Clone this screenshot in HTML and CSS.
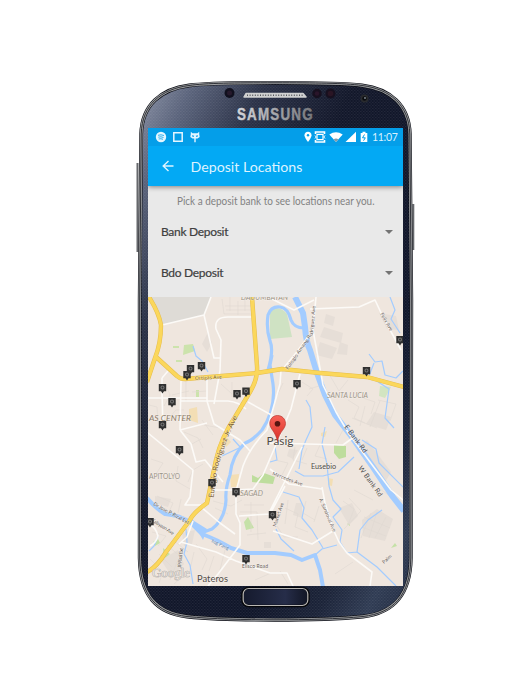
FILE: index.html
```
<!DOCTYPE html>
<html lang="en">
<head>
<meta charset="utf-8">
<title>Deposit Locations</title>
<link rel="stylesheet" href="styles.css">
</head>
<body>
<main class="phone">
  <svg class="phone-body" viewBox="130 75 290 552" aria-hidden="true">
    <defs>
      <linearGradient id="navy" x1="0" y1="0" x2="1" y2="1">
        <stop offset="0" stop-color="#8d94a8"/><stop offset=".1" stop-color="#5b647c"/><stop offset=".23" stop-color="#2b3248"/><stop offset=".4" stop-color="#12172a"/><stop offset=".7" stop-color="#10162a"/><stop offset=".82" stop-color="#1b2338"/><stop offset=".91" stop-color="#303c54"/><stop offset="1" stop-color="#202a40"/>
      </linearGradient>
      <linearGradient id="letters"><stop offset="0" stop-color="#d5d6da"/><stop offset="1" stop-color="#77787c"/></linearGradient>
      <linearGradient id="key"><stop offset="0" stop-color="#151a2d"/><stop offset=".65" stop-color="#262d49"/><stop offset="1" stop-color="#111523"/></linearGradient>
      <pattern id="weave" width="3" height="3" patternUnits="userSpaceOnUse"><path d="M0 .5H1.500M1.500 2H3" stroke="#fff" stroke-opacity=".07"/></pattern>
      <path id="shell" d="M275 82.800C235 82.800 206 83 189 85.500C161 89 142 105 141.200 134L139.700 300V558C140.200 596 157 613 187 616.500C212 619 244 619.800 275 619.800C306 619.800 338 619 363 616.500C393 613 410.300 596 410.800 558L411.300 300L409.800 134C409 105 390 89 362 85.500C344 83 315 82.800 275 82.800Z"/>
    </defs>
    <path d="M137.500 163V252M413.300 204V250" stroke="#66686c" stroke-width="2"/>
    <use href="#shell" fill="url(#navy)" stroke="#0b0d15" stroke-width="3.800"/>
    <use href="#shell" fill="url(#weave)" stroke="#a0a2a4" stroke-width="2.600"/>
    <use href="#shell" fill="none" stroke="#303238" stroke-width="1"/>
    <circle cx="229.500" cy="93" r="5" fill="#10101e"/><circle cx="229.500" cy="93" r="2.500" fill="#26192c"/>
    <circle cx="317" cy="93.500" r="4.700" fill="#17101f"/><circle cx="317" cy="93.500" r="2.300" fill="#2a152a"/><circle cx="330.500" cy="93.500" r="5" fill="#17101f"/><circle cx="330.500" cy="93.500" r="2.800" fill="#2a1524"/>
    <circle cx="364.500" cy="98.500" r="4" fill="#292b2e"/><circle cx="364.500" cy="98.500" r="2.200" fill="#090b0e"/><circle cx="365" cy="98" r=".9" fill="#87909a"/>
    <path d="M246 93.500H303L306 97H244Z" fill="#d0d1d1" stroke="#d0d1d1" stroke-width="1.500" stroke-linejoin="round"/>
    <path d="M247 95.300H304" stroke="#55585c" stroke-width="1.500" stroke-dasharray="1 1.600"/>
    <g class="brand" transform="translate(237 120) scale(.84 1)"><text textLength="90" fill="url(#letters)" stroke="url(#letters)">SAMSUNG</text></g>
    <rect x="242.500" y="588" width="66" height="18" rx="6" fill="url(#key)" stroke="#050609" stroke-width="2.500"/>
    <rect x="243.200" y="588.500" width="64.600" height="17" rx="5.500" fill="none" stroke="#b9b7b4" stroke-width="1.200"/>
  </svg>
  <section class="screen">
    <header class="app-header">
      <div class="status-bar">
        <div class="status-group notifications">
          <svg class="glyph" viewBox="0 0 12 12"><circle cx="6" cy="6" r="5.200" fill="#e5f6ff"/><path d="M3 4.300Q6 3.200 9 4.500M3.300 6.200Q6 5.200 8.500 6.500M3.700 8Q6 7.300 8 8.300" fill="none" stroke="#049ee9" stroke-width=".8"/></svg>
          <svg class="glyph" viewBox="0 0 12 12"><path d="M1.800 1.800H10.200V10.200H1.800Z" fill="none" stroke="#e5f6ff" stroke-width="1.500"/></svg>
          <svg class="glyph" viewBox="0 0 12 12"><path d="M1.800.800L3.500 2.300H8.500L10.200.800V3L10.700 6L8.500 7.500H6.700V11.200H5.300V7.500H3.500L1.300 6L1.800 3Z" fill="#e5f6ff"/><path d="M3 4.200L5.300 4.800L4.500 6L3.200 5.500ZM9 4.200L6.700 4.800L7.500 6L8.800 5.500Z" fill="#049ee9"/></svg>
        </div>
        <div class="status-group indicators">
          <svg width="8" height="12" viewBox="0 0 8 12"><path d="M4 .8C1.900.8.500 2.300.500 4.200C.5 6.500 4 11 4 11S7.500 6.500 7.500 4.200C7.500 2.300 6.100.8 4 .8Z" fill="#fff"/><circle cx="4" cy="4.300" r="1.200" fill="#049ee9"/></svg>
          <svg width="12" height="12" viewBox="0 0 12 12"><path d="M1.500 3V1H10.500V3M1.500 9V11H10.500V9" fill="none" stroke="#fff" stroke-width="1.600"/><path d="M3 3.300H9V8.700H3Z" fill="none" stroke="#fff" stroke-width="1.200"/><path d="M1 4.500L2.200 6L1 7.500M11 4.500L9.800 6L11 7.500" fill="none" stroke="#fff"/></svg>
          <svg width="14" height="12" viewBox="0 0 14 12"><path d="M.3 3.500Q7-1 13.700 3.500L7 11Z" fill="#fff"/><path d="M4.600 8.300Q7 6.800 9.400 8.300L7 11Z" fill="#899ba6"/></svg>
          <svg width="12" height="12" viewBox="0 0 12 12"><path d="M.5 11L11 .8V11Z" fill="#fff"/></svg>
          <svg width="8" height="12" viewBox="0 0 8 12"><path d="M.7 2H2.500V.8H5.500V2H7.300V11H.7Z" fill="#fff"/><path d="M4.500 3.500L2.500 6.800H5.300L3.500 9.700" fill="none" stroke="#049ee9"/></svg>
          <span class="clock">11:07</span>
        </div>
      </div>
      <div class="toolbar">
        <svg class="back" viewBox="0 0 12 12"><path d="M6.500 1L1.200 6L6.500 11M1.200 6H11.500" fill="none" stroke="#def4ff" stroke-width="1.400"/></svg>
        <h1 class="title">Deposit Locations</h1>
      </div>
    </header>
    <div class="chooser">
      <p class="hint"><svg width="202" height="16" viewBox="0 0 202 16"><text x="0" y="10.500" textLength="197.500" lengthAdjust="spacingAndGlyphs">Pick a deposit bank to see locations near you.</text></svg></p>
      <div class="select-row"><span>Bank Deposit</span><i class="caret"></i></div>
      <div class="select-row"><span>Bdo Deposit</span><i class="caret"></i></div>
    </div>
    <svg class="map" viewBox="148 297 255 289" role="img" aria-label="Map of deposit locations in Pasig">
      <defs>
        <g id="branch"><path d="M-3.700-4H3.700V3.300H1.500L0 5.500L-1.500 3.300H-3.700Z" fill="#303030"/><circle cy="-.5" r="1.500" fill="none" stroke="#747474" stroke-width="1.100"/></g>
        <path id="rodriguez" d="M213.500 498L218 467L228 437L240 412"/>
        <path id="amang" d="M288 370L313 334L316.500 297"/>
        <linearGradient id="pin" x2="0" y2="1"><stop stop-color="#f76258"/><stop offset="1" stop-color="#d93026"/></linearGradient>
      </defs>
      <path d="M148 297H403V586H148Z" fill="#efe6de"/>
      <path d="M149 297H211L204 315L162 325L158 310Z" fill="#dedbd6"/>
      <g fill="#cfe2c3">
        <path d="M270 310Q280 305 287 314L292 337L270 339Z"/>
        <path d="M380 386L391 387L385 398L379 396Z" fill="#d2e5c1"/>
        <path d="M184 345L193 344L195 351L183 355Z" fill="#cce3ac"/>
        <path d="M173 346H179V348H173ZM176 360H182V362H176ZM196 390H199V397H196Z" fill="#cce3ac"/>
        <path d="M334 445L346 446L346 457L339 459L334 453Z" fill="#bedd9d"/>
        <path d="M252 475L258 478L264 473L275 477L273 484L252 482Z" fill="#bedd9d"/>
        <path d="M244 522L248 517L254 528L246 530ZM153 542L158 539L160 543L155 546ZM374 522L379 518L384 524L382 529ZM391 548L395 543L397 546Z" fill="#c5e1a7"/>
        <path d="M163 548L170 554L164 560ZM343 512L347 508L348 512ZM347 524L350 522V526Z" fill="#c5e1a7"/>
      </g>
      <path d="M189 409L197 407L198 423L189 420ZM230 475L239 474L238 487H231ZM221 440L226 436L231 442L226 447ZM321 433L327 431L325 437L321 436ZM328 478L333 479L332 486L328 485Z" fill="#f3deb4"/>
      <g fill="#e6ded7">
        <path d="M324 327L343 333L341 343L320 337ZM320 342L337 348L332 359L316 355ZM340 342L348 345L347 355L337 354ZM379 313L396 316L399 330L387 329ZM326 314L335 317L333 326L324 323ZM374 412L391 417L386 430L366 424ZM357 450L367 440L391 472L384 484ZM362 520L377 509L393 519L385 541L363 536ZM339 508L352 503L358 516L349 525ZM296 503L302 503L302 518L293 515Z"/>
        <path d="M208 332L212 343L207 352L202 344ZM161 560L178 550L184 564L172 577ZM264 542L271 542L271 548L264 548ZM155 496L171 499L168 507L155 503ZM182 533L195 530L192 544L184 546ZM289 449L298 450L293 459L287 456Z"/>
      </g>
      <!-- Local streets -->
      <g class="blocks">
        <path d="M222 299L224 314H251M230 297V311M238 301V315M245 298V311M225 306H252M226 310H252"/>
        <path d="M166 385L170 395L164 406M172 395L189 391M186 380V402M192 392L207 391M232 382V397M221 384L232 394M283 383L276 398M302 382L313 389L307 396M309 389L319 386M329 374L339 391L348 380"/>
        <path d="M149 405L157 407L158 421M168 419L176 410H184M184 432L198 438L203 448M190 445L201 439M202 420L213 435M204 425L220 428M203 464L193 470L188 482M178 466L176 481L190 489M151 459L163 463L156 474"/>
        <path d="M275 460L288 463L282 475M295 447L293 460L307 464M307 448L302 460M320 445L315 456L327 459M343 430L336 443M348 400L359 407L354 418L365 423M360 397L375 402L371 414M378 400L396 404L390 421M352 418L377 428M365 406L360 426M380 401L370 427"/>
        <path d="M157 496L173 503L169 512M181 499L178 513M213 501L231 506L242 500M215 508L228 514M240 512L257 512L258 540M251 502V532M244 505H264M247 535L266 533M277 526L284 537H298M285 508L298 514L295 527L308 532M288 500L285 524M306 501L303 513L315 520M319 506L314 522M343 501L354 509L348 525M349 498L361 511L344 529M371 513L361 538M377 512L369 538M386 517L375 538M364 517L390 528M362 527L386 536"/>
        <path d="M150 559L163 572L159 583M159 554L172 567M167 545L182 558M173 540L188 552M177 562L170 580M194 552L189 574M196 544L207 559L202 570M214 556L209 571M225 550L220 570M184 575L174 584M335 574L353 562M255 580L271 573M280 571L288 584M354 490L373 500M380 489L397 501M152 532L166 536L158 546"/>
      </g>
      <path d="M193 346L196 356L202 361L208 372M222 456L239 448M233 439L241 448" class="water thin"/>
      <path d="M268 370Q274 350 270 341Q266 329 268 315Q271 306 280 307Q288 308 291 320Q294 328 304 328M272 355L270 365L273 384Q276 409 262 430Q252 441 245 443Q232 455 230 475Q225 489 226 500Q225 519 212 529L201 533" class="water medium"/>
      <path d="M295 297L303 313L305 327Q306 342 310 350L317 373L325 395L335 415L352 437L373 467L393 497L404 511" class="water main"/>
      <path d="M147 498Q154 507 165 514Q180 515 191 523L202 534Q218 540 231 548L247 553L275 553L291 555L302 560L315 555L320 570L323 587" class="water west"/>
      <path d="M191 519L207 529L203 540Z" fill="#a3ccff"/>
      <g class="water thin">
        <path d="M295 471L304 476L323 476L338 472L354 457M306 400L310 407L312 427L306 440L302 450L299 469M325 427L322 444L327 464L329 486L333 500L341 509L333 517L342 530L340 542L347 553L357 552L377 567L396 586M315 555L322 549L337 545M357 552L360 530L368 520L382 510M283 492L299 497L304 508L302 518L312 530L323 548M362 440L376 449L379 463L404 488M270 462L277 460L275 447"/>
        <path d="M390 297L395 310L391 319L400 333M369 354L375 362L382 361L385 375L396 378L403 371M374 363L369 376L389 389L385 418L394 428M186 529L187 542L184 554L190 565L193 584M158 536L154 546L149 551M276 529L281 539L294 551"/>
      </g>
      <g class="roads">
        <path d="M162 325L204 315L211 297M204 315L214 358H220M252 317H230Q214 316 216 329L221 340L220 371L214 404M316 297L313 330L296 353L282 370M310 309L359 307L375 300L383 317L401 350M270 298L294 310L314 300M313 330L323 385L336 412L349 434L373 466L391 490L403 500"/>
        <path d="M162 378V391L163 430M148 398H207M181 381L180 430M180 401H228Q239 402 246 409M207 380V401L214 424L240 440L250 451M148 433L193 470L190 497L185 505H201M180 430L191 444L196 462L205 460L223 482M180 430L207 423M168 371L162 378M248 402L275 417"/>
        <path d="M281 370L280 384L267 430Q250 447 243 466L236 491V514L240 523V545L218 574L208 586M213 490H236L253 489L263 475L275 447L291 409L300 374M270 443L343 445L354 437M302 447L283 485L270 511M270 469L289 484L322 489M285 486L270 514L239 516M322 487L325 503L333 529L339 542L347 553L372 572L370 586M333 531L312 544L273 531M148 523Q156 527 158 536Q156 543 150 546M181 542L216 552L236 561L270 573L287 573L293 586M201 507L220 523L235 534M193 521L187 537L179 544"/>
      </g>
      <path class="highway-edge" d="M149 297Q159 313 161 325Q161 343 155 358L147 382M155 356L177 376Q180 379 185 379L222 376L257 373L282 369L320 373L367 377L404 387M252 297L257 366Q258 379 250 392L235 417Q221 438 216 460L211 484L207 503Q193 513 190 520L166 552Q157 567 147 572"/>
      <path class="highway" d="M149 297Q159 313 161 325Q161 343 155 358L147 382M155 356L177 376Q180 379 185 379L222 376L257 373L282 369L320 373L367 377L404 387M252 297L257 366Q258 379 250 392L235 417Q221 438 216 460L211 484L207 503Q193 513 190 520L166 552Q157 567 147 572"/>
      <g class="labels">
        <text x="241" y="300" class="district" textLength="47">DAUUMBAYAN</text>
        <text x="327" y="398" class="district" textLength="41" lengthAdjust="spacingAndGlyphs">SANTA LUCIA</text>
        <text x="149" y="420.500" class="district large" textLength="42" lengthAdjust="spacingAndGlyphs">AS CENTER</text>
        <text x="149" y="478.500" class="district upright" textLength="31" lengthAdjust="spacingAndGlyphs">APITOLYO</text>
        <text x="240" y="496" class="district" textLength="23" lengthAdjust="spacingAndGlyphs">SAGAD</text>
        <text class="road-name"><textPath href="#rodriguez" textLength="85" lengthAdjust="spacingAndGlyphs">Eulogio Rodriguez Jr. Ave</textPath></text>
        <text class="small"><textPath href="#amang" textLength="72" lengthAdjust="spacingAndGlyphs">Eulogio Amang Rodriguez Ave</textPath></text>
        <text transform="translate(195 380) rotate(-3)" class="small ortigas" textLength="27">Ortigas Ave</text>
        <text transform="translate(380 314) rotate(60)" class="small" textLength="20">Felix Ave</text>
        <text transform="translate(344 427) rotate(53)" class="bank" textLength="33">E Bank Rd</text>
        <text transform="translate(358 468) rotate(54)" class="bank" textLength="36">W Bank Rd</text>
        <text transform="translate(272 475) rotate(20)" class="small" textLength="32">Mercedes Ave</text>
        <text transform="translate(319 499) rotate(67)" class="small" textLength="36">A. Sandoval Ave</text>
        <text transform="translate(153 505) rotate(29)" class="small" textLength="40">Dr Jose P. Rizal Ext</text>
        <text transform="translate(151 521) rotate(33)" class="small" textLength="26">Kalayaan Ave</text>
        <text transform="translate(211 542) rotate(25)" class="small river" textLength="19">Ilog Pasig</text>
        <text transform="translate(181 568) rotate(-84)" class="small" textLength="20">JP Rizal Ext</text>
        <text transform="translate(276 527) rotate(-72)" class="small" textLength="25">Market Ave</text>
        <text x="242" y="568" class="small" textLength="26">Elisco Road</text>
        <text transform="translate(384 564) rotate(-42)" class="small">Palm</text>
        <text x="311" y="469" class="town" textLength="25" lengthAdjust="spacingAndGlyphs">Eusebio</text>
        <text x="197" y="582" class="city" textLength="31" lengthAdjust="spacingAndGlyphs">Pateros</text>
        <text x="266.500" y="445" class="city pasig" textLength="27" lengthAdjust="spacingAndGlyphs">Pasig</text>
        <text x="152" y="577" class="google" textLength="38" lengthAdjust="spacingAndGlyphs">Google</text>
      </g>
      <use href="#branch" x="162.500" y="388"/><use href="#branch" x="172" y="402"/><use href="#branch" x="162.500" y="425"/><use href="#branch" x="179.500" y="450"/>
      <use href="#branch" x="190.500" y="369"/><use href="#branch" x="187" y="375"/><use href="#branch" x="201.500" y="366"/><use href="#branch" x="237" y="394"/><use href="#branch" x="246" y="391.500"/>
      <use href="#branch" x="297" y="384"/><use href="#branch" x="366.500" y="371"/><use href="#branch" x="400" y="340"/><use href="#branch" x="212" y="483"/><use href="#branch" x="236" y="492"/>
      <use href="#branch" x="272.500" y="515"/><use href="#branch" x="246" y="559"/><use href="#branch" x="150" y="522"/>
      <path d="M277.500 415.500C273 415.500 269.800 419 269.800 423.500C269.800 429 275.700 431.500 277.500 441.500C279.300 431.500 285.500 429 285.500 423.500C285.500 419 282 415.500 277.500 415.500Z" fill="url(#pin)" stroke="#b6372f" stroke-width=".7"/><circle cx="277.500" cy="423.800" r="2.800" fill="#571510"/>
    </svg>
  </section>
</main>
</body>
</html>
```

FILE: styles.css
```
* { box-sizing: border-box; }

body {
  margin: 0;
  background: #fff;
  font-family: Lato, "Liberation Sans", sans-serif;
}

.phone {
  position: relative;
  width: 290px;
  height: 552px;
  margin: 75px 0 0 130px;
  padding: 53px 17px 41px 18px;
}

.phone-body {
  position: absolute;
  inset: 0;
  width: 290px;
  height: 552px;
}

.brand {
  font: bold 16px "Liberation Sans", sans-serif;
  stroke-width: .4px;
}

.screen {
  position: relative;
  display: flex;
  flex-direction: column;
  width: 255px;
  height: 458px;
  overflow: hidden;
  background: #e9e9e9;
}

.app-header {
  position: relative;
  flex: none;
  height: 58px;
  background: #03a9f4;
  box-shadow: 0 1px 5px rgba(0, 0, 0, .45);
}

.status-bar {
  display: flex;
  align-items: center;
  justify-content: space-between;
  height: 18px;
  padding: 0 6px 0 7px;
  background: #049ee9;
}

.status-group {
  display: flex;
  align-items: center;
}

.notifications { gap: 5px; }

.indicators { gap: 2.5px; }

.glyph {
  width: 12px;
  height: 12px;
}

.clock {
  width: 25px;
  margin-left: 2px;
  color: #d9f2ff;
  font-size: 10.5px;
  letter-spacing: -.3px;
  line-height: 18px;
}

.toolbar {
  display: flex;
  align-items: center;
  height: 40px;
  padding-left: 14px;
  gap: 16.5px;
}

.back {
  width: 12px;
  height: 12px;
}

.title {
  margin: 2px 0 0;
  color: #ddf3ff;
  font-size: 14.2px;
  font-weight: 400;
  line-height: 20px;
}

.chooser {
  flex: none;
  height: 111px;
  padding: 8px 10px 0 13px;
}

.hint {
  height: 14px;
  margin: 0 0 3px 16px;
  font-size: 10.5px;
  line-height: 14px;
}

.hint svg { display: block; }
.hint text { fill: #828282; }

.select-row {
  display: flex;
  align-items: center;
  justify-content: space-between;
  height: 41.5px;
  color: #404040;
  font-size: 12px;
  letter-spacing: -.3px;
  line-height: 16px;
  -webkit-text-stroke: .2px #404040;
}

.caret {
  border: solid transparent;
  border-width: 4.5px 4px 0;
  border-top-color: #747474;
}

.map {
  flex: none;
  display: block;
  width: 255px;
  height: 289px;
}

.blocks { fill: none; stroke: #dfd8d1; stroke-width: .6; }
.water { fill: none; stroke: #a3ccff; stroke-linejoin: round; }
.thin { stroke-width: 1.2; }
.medium { stroke-width: 3.2; }
.main { stroke-width: 6; }
.west { stroke-width: 4; }
.roads { fill: none; stroke: #fcfaf7; stroke-width: 1.6; stroke-linejoin: round; }
.highway-edge { fill: none; stroke: #e6bd4c; stroke-width: 4.4; stroke-linejoin: round; }
.highway { fill: none; stroke: #fbd75b; stroke-width: 3.4; stroke-linejoin: round; }

.labels { fill: #686058; }
.labels text { paint-order: stroke; stroke: rgba(255, 255, 255, .4); stroke-width: .8px; }
.district { fill: #9b9386; font-size: 7px; font-style: italic; }
.large { fill: #8b7b68; font-size: 8px; }
.upright { font-style: normal; }
.road-name { fill: #785e35; font-size: 7.3px; }
.small { font-size: 5px; }
.ortigas { fill: #806225; }
.river { fill: #587da6; }
.bank { fill: #4f4b48; font-size: 7px; }
.town { fill: #4b4743; font-size: 7.5px; }
.city { fill: #514b45; font-size: 10px; }
.pasig { font-size: 11.5px; }
.labels .google { fill: rgba(240, 236, 231, .85); stroke: #a5a09b; stroke-width: .7px; font: 12px "Liberation Serif", serif; }
```
